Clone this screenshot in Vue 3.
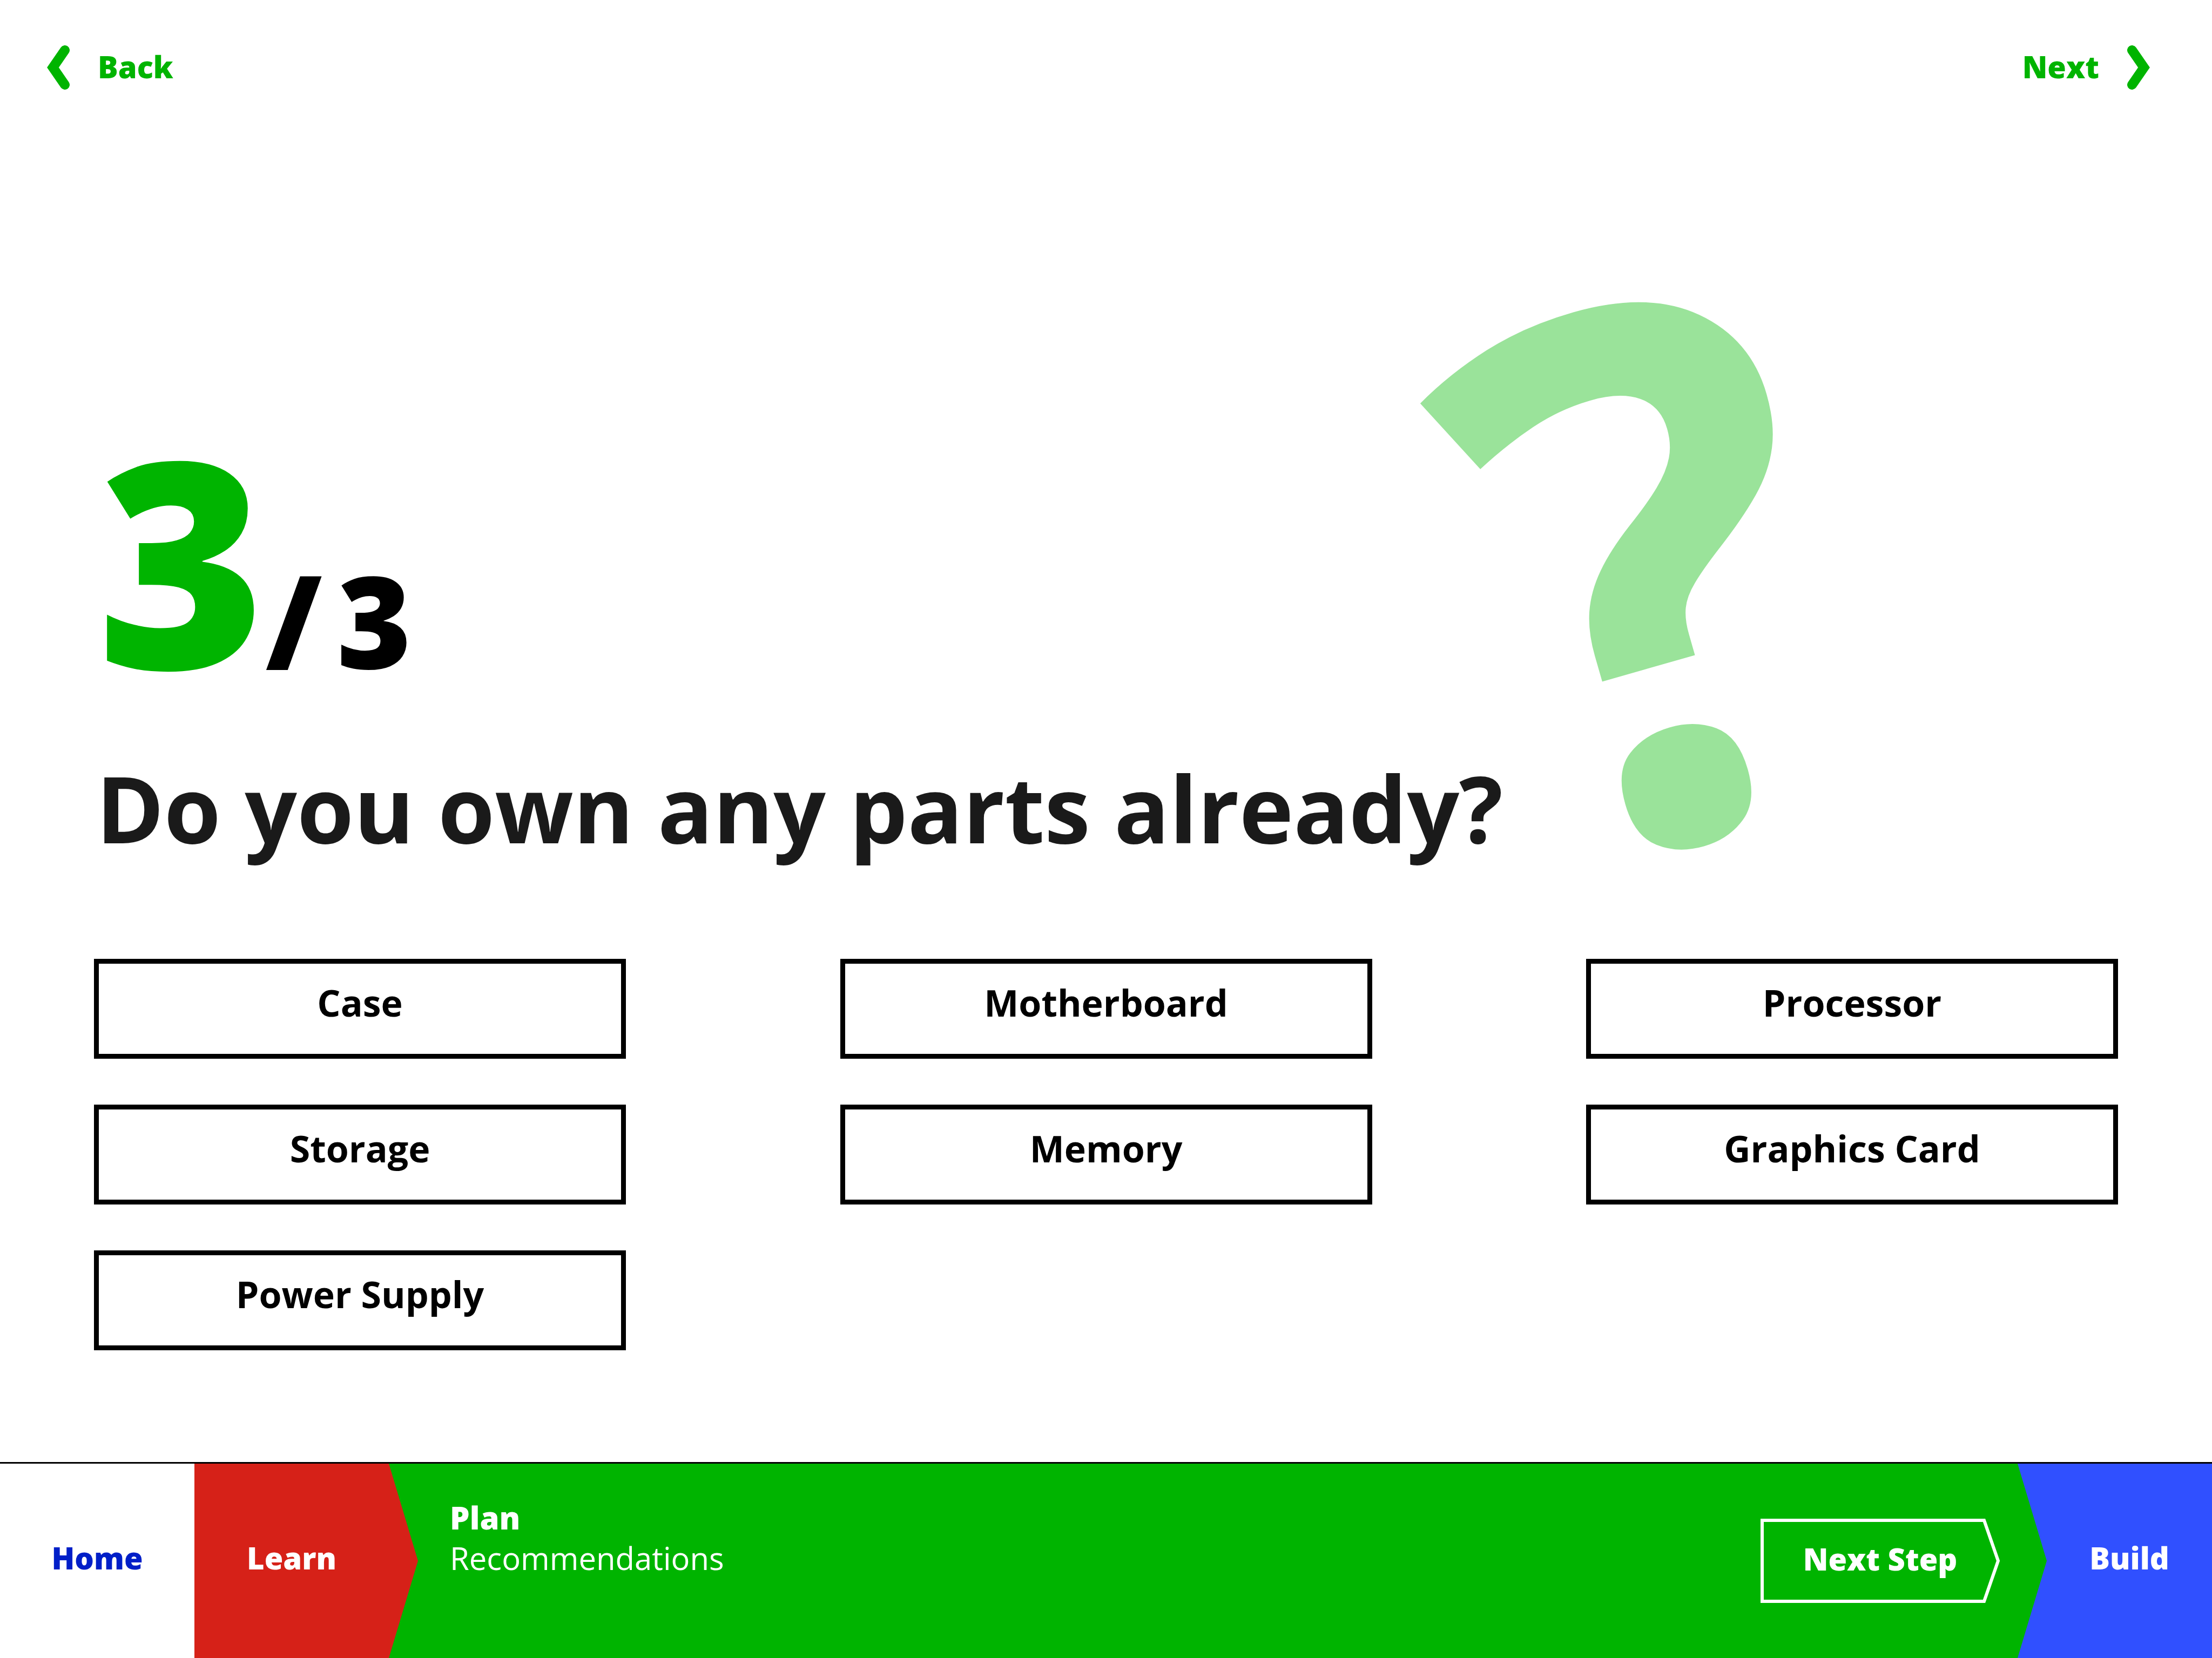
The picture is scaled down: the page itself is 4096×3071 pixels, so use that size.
<script setup>
import { ref } from 'vue'

const parts = ['Case', 'Motherboard', 'Processor', 'Storage', 'Memory', 'Graphics Card', 'Power Supply']
const owned = ref([])

function toggle(part) {
  owned.value = owned.value.includes(part)
    ? owned.value.filter((p) => p !== part)
    : [...owned.value, part]
}
</script>

<template>
  <div class="page">
    <header class="pager">
      <a class="pager-link" href="#back">
        <svg class="chevron" viewBox="0 0 42 82" aria-hidden="true">
          <polyline points="33,9 11,41 33,73" />
        </svg>
        <span class="pager-label">Back</span>
      </a>
      <a class="pager-link" href="#next">
        <span class="pager-label">Next</span>
        <svg class="chevron" viewBox="0 0 42 82" aria-hidden="true">
          <polyline points="9,9 31,41 9,73" />
        </svg>
      </a>
    </header>

    <main class="question">
      <span class="mark" aria-hidden="true">?</span>
      <p class="counter">
        <span class="current">3</span>
        <span class="total"><span class="slash">/</span>3</span>
      </p>
      <h1 class="title">Do you own any parts already?</h1>
      <div class="parts">
        <button
          v-for="part in parts"
          :key="part"
          class="part"
          type="button"
          :aria-pressed="owned.includes(part)"
          @click="toggle(part)"
        >{{ part }}</button>
      </div>
    </main>

    <nav class="steps">
      <a class="step home" href="#home">Home</a>
      <a class="step learn" href="#learn">Learn</a>
      <section class="plan">
        <div class="plan-text">
          <strong class="plan-name">Plan</strong>
          <span class="plan-stage">Recommendations</span>
        </div>
        <button class="next-step" type="button">
          <svg class="outline" viewBox="0 0 443 156" aria-hidden="true">
            <polygon points="3,3 414,3 440,78 414,153 3,153" />
          </svg>
          Next Step
        </button>
      </section>
      <a class="step build" href="#build">Build</a>
    </nav>
  </div>
</template>

<style>
body {
  margin: 0;
  background: #fff;
}
</style>

<style scoped>
.page {
  display: flex;
  flex-direction: column;
  min-height: 100vh;
  overflow: hidden;
  background: #fff;
  color: #000;
  font-family: "Open Sans", "Noto Sans", sans-serif;
  font-weight: 700;
}

a {
  text-decoration: none;
}

button {
  margin: 0;
  background: none;
  font: inherit;
}

.pager {
  display: flex;
  justify-content: space-between;
  padding: 84px 115px 0 87px;
}

.pager-link {
  display: flex;
  align-items: center;
  gap: 52px;
  height: 82px;
  color: #00b400;
  font-size: 56px;
  font-weight: 800;
}

.pager-label {
  padding-bottom: 4px;
}

.chevron {
  width: 42px;
  height: 82px;
  fill: none;
  stroke: #00b400;
  stroke-width: 18;
  stroke-linecap: round;
  stroke-linejoin: miter;
}

.question {
  position: relative;
  display: flex;
  flex: 1;
  flex-direction: column;
  justify-content: flex-end;
  padding: 0 174px 207px;
}

.mark {
  position: absolute;
  right: 720px;
  bottom: 995px;
  color: #9ae39a;
  font-size: 1380px;
  line-height: 1380px;
  transform: rotate(-16deg);
}

.counter {
  display: flex;
  align-items: baseline;
  margin: 0 0 148px 6px;
  font-weight: 800;
}

.current {
  color: #00b400;
  font-size: 532px;
  line-height: 400px;
}

.total {
  font-size: 236px;
  line-height: 200px;
}

.slash {
  margin-right: 28px;
}

.title {
  margin: 0 0 180px 4px;
  color: #1a1a1a;
  font-size: 170px;
  font-weight: 700;
  line-height: 200px;
}

.parts {
  display: grid;
  grid-template-columns: repeat(3, 985px);
  justify-content: space-between;
  row-gap: 85px;
}

.part {
  box-sizing: border-box;
  height: 185px;
  padding: 0 0 24px;
  border: 9px solid #000;
  color: #000;
  font-size: 68px;
  line-height: 80px;
}

.steps {
  display: flex;
  height: 360px;
  border-top: 3px solid #000;
  font-size: 56px;
  font-weight: 800;
  line-height: 75px;
}

.step {
  display: flex;
  box-sizing: border-box;
  align-items: center;
  justify-content: center;
  padding-bottom: 12px;
  color: #fff;
}

.home {
  width: 360px;
  color: #001fc8;
}

.learn {
  z-index: 2;
  width: 414px;
  margin-right: -54px;
  padding-right: 54px;
  background: #d62118;
  clip-path: polygon(0 0, calc(100% - 54px) 0, 100% 50%, calc(100% - 54px) 100%, 0 100%);
}

.plan {
  z-index: 1;
  display: flex;
  box-sizing: border-box;
  flex: 1;
  align-items: center;
  justify-content: space-between;
  margin-right: -54px;
  padding: 0 87px 0 113px;
  background: #00b400;
  clip-path: polygon(0 0, calc(100% - 54px) 0, 100% 50%, calc(100% - 54px) 100%, 0 100%);
  color: #fff;
}

.plan-text {
  display: flex;
  flex-direction: column;
  padding-bottom: 86px;
}

.plan-name,
.plan-stage {
  font-size: 58px;
}

.plan-name {
  font-weight: 800;
}

.plan-stage {
  font-weight: 400;
}

.next-step {
  position: relative;
  width: 443px;
  height: 156px;
  padding: 0 0 8px;
  border: 0;
  color: #fff;
}

.outline {
  position: absolute;
  inset: 0;
  width: 443px;
  height: 156px;
  fill: none;
  stroke: #fff;
  stroke-width: 6;
}

.build {
  width: 360px;
  padding-left: 54px;
  background: #3050ff;
}
</style>
